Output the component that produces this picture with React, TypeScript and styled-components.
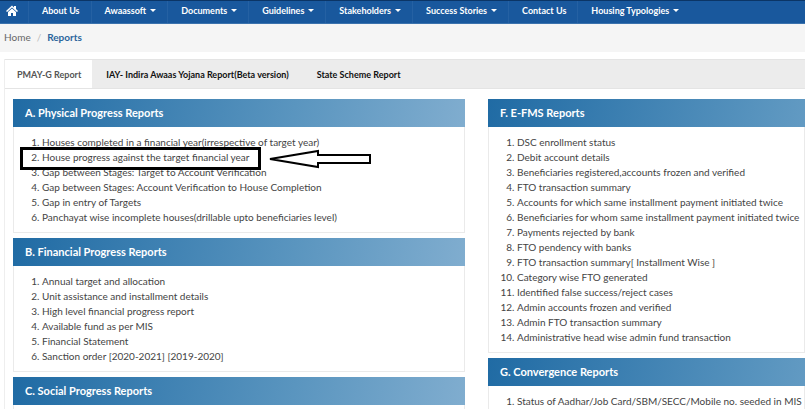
import React from "react";
import styled, { createGlobalStyle } from "styled-components";

const GlobalStyle = createGlobalStyle`
  *, *::before, *::after { box-sizing: border-box; }
  body {
    margin: 0;
    background: #fff;
    color: #444;
    font-family: Lato, "Liberation Sans", sans-serif;
    font-size: 10px;
    line-height: 15px;
  }
`;

const Page = styled.div`
  height: 100vh;
  overflow: hidden;
`;

const NavBar = styled.nav`
  display: flex;
  height: 24px;
  background: #19589d;
  border-top: 1px solid #0b3566;
  border-bottom: 1px solid #3b72ad;
`;

const NavItem = styled.button`
  display: flex;
  align-items: center;
  gap: 4px;
  padding: 0 11px 4px 13px;
  border: 0;
  border-right: 1px solid #2561a3;
  background: none;
  color: #fff;
  font: inherit;
  font-size: 9px;
  font-weight: 700;
  white-space: nowrap;

  &:first-child { padding-left: 6px; padding-right: 10px; }
  &:last-child { border-right: 0; }
`;

const Caret = styled.span`
  border: 3px solid transparent;
  border-top-color: #fff;
  border-bottom: 0;
`;

const Crumbs = styled.nav`
  display: flex;
  align-items: center;
  gap: 6px;
  height: 28px;
  padding: 0 4px 2px;
  background: #f5f5f5;
`;

const CrumbLink = styled.a<{ $current?: boolean }>`
  color: ${(p) => (p.$current ? "#2b659c" : "#666")};
  font-weight: ${(p) => (p.$current ? 700 : 400)};
  text-decoration: none;
`;

const Slash = styled.span`
  color: #bbb;
`;

const Content = styled.main`
  margin: 7px 0 0 4px;
  border-left: 1px solid #eee;
`;

const TabList = styled.div`
  display: flex;
  height: 30px;
  border: 1px solid #e4e4e4;
  border-right: 0;
  border-left: 0;
  background: #ececec;
`;

const Tab = styled.button<{ $active?: boolean }>`
  padding: 0 14px;
  border: 0;
  background: ${(p) => (p.$active ? "#fff" : "transparent")};
  color: ${(p) => (p.$active ? "#555" : "#111")};
  font: inherit;
  font-size: 9px;
  font-weight: 700;
  white-space: nowrap;

  &:first-child { padding: 0 11px 0 12px; }
`;

const Columns = styled.div`
  display: grid;
  grid-template-columns: 452fr 317fr;
  column-gap: 23px;
  align-items: start;
  padding: 10px 0 0 8px;
`;

const Column = styled.div`
  display: grid;
  gap: 5px;
  min-width: 0;
`;

const Panel = styled.section`
  border: 1px solid #eaeaea;
  border-top: 0;
`;

const PanelTitle = styled.h2<{ $wide?: boolean }>`
  height: 28px;
  margin: 0 -1px;
  padding: 0 12px;
  background: linear-gradient(100deg, #206ba4, #5a95bf 62%, #80adcf);
  background-size: ${(p) => (p.$wide ? "143% 100%" : "100% 100%")};
  color: #fff;
  font-size: 11px;
  font-weight: 700;
  line-height: 28px;
  white-space: nowrap;
`;

const ReportList = styled.ol`
  margin: 0;
  padding: 8px 0 7px 28px;
  white-space: nowrap;
`;

const ReportRow = styled.li`
  position: relative;
  height: 15px;
`;

const Annotation = styled.svg`
  position: absolute;
  z-index: 1;
  left: -22px;
  top: -7px;
  width: 356px;
  height: 32px;
  pointer-events: none;
`;

const navItems = [
  { label: "About Us" },
  { label: "Awaassoft", menu: true },
  { label: "Documents", menu: true },
  { label: "Guidelines", menu: true },
  { label: "Stakeholders", menu: true },
  { label: "Success Stories", menu: true },
  { label: "Contact Us" },
  { label: "Housing Typologies", menu: true },
];

type Group = { title: string; rows: string[]; marked?: number };

const leftGroups: Group[] = [
  {
    title: "A. Physical Progress Reports",
    marked: 1,
    rows: [
      "Houses completed in a financial year(irrespective of target year)",
      "House progress against the target financial year",
      "Gap between Stages: Target to Account Verification",
      "Gap between Stages: Account Verification to House Completion",
      "Gap in entry of Targets",
      "Panchayat wise incomplete houses(drillable upto beneficiaries level)",
    ],
  },
  {
    title: "B. Financial Progress Reports",
    rows: [
      "Annual target and allocation",
      "Unit assistance and installment details",
      "High level financial progress report",
      "Available fund as per MIS",
      "Financial Statement",
      "Sanction order [2020-2021] [2019-2020]",
    ],
  },
  { title: "C. Social Progress Reports", rows: [] },
];

const rightGroups: Group[] = [
  {
    title: "F. E-FMS Reports",
    rows: [
      "DSC enrollment status",
      "Debit account details",
      "Beneficiaries registered,accounts frozen and verified",
      "FTO transaction summary",
      "Accounts for which same installment payment initiated twice",
      "Beneficiaries for whom same installment payment initiated twice",
      "Payments rejected by bank",
      "FTO pendency with banks",
      "FTO transaction summary[ Installment Wise ]",
      "Category wise FTO generated",
      "Identified false success/reject cases",
      "Admin accounts frozen and verified",
      "Admin FTO transaction summary",
      "Administrative head wise admin fund transaction",
    ],
  },
  {
    title: "G. Convergence Reports",
    rows: ["Status of Aadhar/Job Card/SBM/SECC/Mobile no. seeded in MIS"],
  },
];

const HomeIcon = () => (
  <svg width="12" height="11" viewBox="0 0 24 22" fill="#fff" aria-hidden="true">
    <path d="M12 1 0 12l2 2L12 5l10 9 2-2-4-4V2h-4v3z" />
    <path d="M12 7 4 14v8h6v-6h4v6h6v-8z" />
  </svg>
);

const Marker = () => (
  <Annotation viewBox="0 0 356 32" fill="none" stroke="#000" aria-hidden="true">
    <path d="M1.5 5.5h238v20H1.5z" strokeWidth="3" />
    <path d="M250 16 298 8v4h52v8h-52v4z" strokeWidth="2" />
  </Annotation>
);

const ReportPanel = ({ group, wide }: { group: Group; wide?: boolean }) => (
  <Panel>
    <PanelTitle $wide={wide}>{group.title}</PanelTitle>
    <ReportList>
      {group.rows.map((row, i) => (
        <ReportRow key={row}>
          {row}
          {group.marked === i && <Marker />}
        </ReportRow>
      ))}
    </ReportList>
  </Panel>
);

export default function App() {
  return (
    <>
      <GlobalStyle />
      <Page>
        <NavBar>
          <NavItem aria-label="Home">
            <HomeIcon />
          </NavItem>
          {navItems.map((item) => (
            <NavItem key={item.label}>
              {item.label}
              {item.menu && <Caret />}
            </NavItem>
          ))}
        </NavBar>
        <Crumbs aria-label="Breadcrumb">
          <CrumbLink href="#home">Home</CrumbLink>
          <Slash>/</Slash>
          <CrumbLink href="#reports" $current>
            Reports
          </CrumbLink>
        </Crumbs>
        <Content>
          <TabList role="tablist">
            <Tab role="tab" aria-selected="true" $active>
              PMAY-G Report
            </Tab>
            <Tab role="tab" aria-selected="false">
              IAY- Indira Awaas Yojana Report(Beta version)
            </Tab>
            <Tab role="tab" aria-selected="false">
              State Scheme Report
            </Tab>
          </TabList>
          <Columns>
            <Column>
              {leftGroups.map((g) => (
                <ReportPanel key={g.title} group={g} />
              ))}
            </Column>
            <Column>
              {rightGroups.map((g) => (
                <ReportPanel key={g.title} group={g} wide />
              ))}
            </Column>
          </Columns>
        </Content>
      </Page>
    </>
  );
}
